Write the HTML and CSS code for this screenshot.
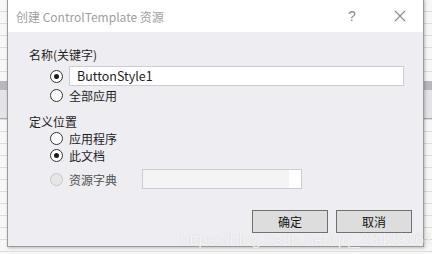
FILE: index.html
```html
<!DOCTYPE html>
<html lang="zh-CN">
<head>
  <meta charset="UTF-8">
  <title>创建 ControlTemplate 资源</title>
  <link rel="stylesheet" href="styles.css">
</head>
<body>
  <div class="backdrop">
    <div class="band"></div>
  </div>

  <div class="dialog">
    <div class="titlebar">
      <span class="title">创建 ControlTemplate 资源</span>
      <span class="help">?</span>
      <svg class="close" width="12" height="12" viewBox="0 0 12 12">
        <path d="M1 1 L11 11 M11 1 L1 11" stroke="#8a8a8a" stroke-width="1.1" fill="none"/>
      </svg>
    </div>

    <div class="content">
      <div class="group-label">名称(关键字)</div>
      <div class="row row-input">
        <span class="radio checked"></span>
        <div class="textbox">ButtonStyle1</div>
      </div>
      <div class="row">
        <span class="radio"></span>
        <span class="option">全部应用</span>
      </div>

      <div class="group-label second">定义位置</div>
      <div class="row">
        <span class="radio"></span>
        <span class="option">应用程序</span>
      </div>
      <div class="row">
        <span class="radio checked"></span>
        <span class="option">此文档</span>
      </div>
      <div class="row row-input dict">
        <span class="radio disabled"></span>
        <span class="option">资源字典</span>
        <div class="combo"><span class="combo-arrow"></span></div>
      </div>

      <div class="buttons">
        <button class="btn">确定</button>
        <button class="btn">取消</button>
      </div>
    </div>
  </div>

  <div class="watermark">https://blog.csdn.net/qq_28429161</div>
</body>
</html>
```

FILE: styles.css
```css
body {
  margin: 0;
  width: 432px;
  height: 254px;
  overflow: hidden;
  position: relative;
  background: #f7f7f7;
  font-family: "Noto Sans CJK SC", "Noto Sans", sans-serif;
  color: #1e1e1e;
}

/* 背後のエディタっぽい罫線 */
.backdrop {
  position: absolute;
  top: 0;
  left: 0;
  width: 100%;
  height: 100%;
  background:
    repeating-linear-gradient(to bottom, transparent 0, transparent 11px, #dcdcdc 11px, #dcdcdc 12px);
}

.band {
  position: absolute;
  top: 81px;
  left: 0;
  width: 100%;
  height: 38px;
  background: linear-gradient(to bottom, #b9b9bd 0, #b9b9bd 9px, #e4e4e8 9px, #e4e4e8 37px, #a9a9b5 37px);
}

.dialog {
  position: absolute; /* デスクトップ上のウィンドウ */
  left: 7px;
  top: -1px;
  width: 415px;
  height: 246px;
  border: 1px solid #9a9a9a;
  background: #eeedf2;
  box-shadow: 1px 1px 3px rgba(0, 0, 0, 0.25);
  display: flex;
  flex-direction: column;
}

.titlebar {
  height: 32px;
  background: #ffffff;
  display: flex;
  align-items: center;
  padding-left: 8px;
  flex-shrink: 0;
}

.title {
  font-size: 12px;
  color: #a0a0a0;
  flex: 1;
}

.help {
  font-size: 14px;
  color: #8a8a8a;
  width: 14px;
  margin-right: 32px;
  font-family: "Liberation Sans", sans-serif;
}

.close {
  margin-right: 17px;
}

.content {
  padding: 15px 11px 0 21px;
  font-size: 12px;
  display: flex;
  flex-direction: column;
}

.group-label {
  height: 16px;
  line-height: 16px;
}

.group-label.second {
  margin-top: 10px;
}

.row {
  display: flex;
  align-items: center;
  height: 17px;
  padding-left: 21px;
}

.row-input {
  height: 20px;
  margin-top: 3px;
  margin-bottom: 1px;
}

.row.dict {
  margin-top: 5px;
}

.radio {
  width: 11px;
  height: 11px;
  border: 1px solid #333333;
  border-radius: 50%;
  background: #ffffff;
  margin-right: 6px;
  flex-shrink: 0;
  display: flex;
  align-items: center;
  justify-content: center;
}

.radio.checked::after {
  content: "";
  width: 5px;
  height: 5px;
  border-radius: 50%;
  background: #1b1b1b;
}

.radio.disabled {
  border-color: #c8c8c8;
  background: #e6e6e6;
}

.textbox {
  width: 326px;
  height: 18px;
  line-height: 18px;
  border: 1px solid #cccbd8;
  background: #ffffff;
  padding-left: 7px;
  font-size: 12.5px;
  color: #1e1e1e;
}

.option {
  line-height: 17px;
}

.dict .option {
  color: #505050;
  width: 73px;
}

.combo {
  width: 158px;
  height: 18px;
  border: 1px solid #cccbd8;
  background: #f4f4f4;
  display: flex;
  justify-content: flex-end;
}

.combo-arrow {
  width: 12px;
  height: 18px;
  background: #ffffff;
}

.buttons {
  display: flex;
  justify-content: flex-end;
  gap: 8px;
  margin-top: 20px;
}

.btn {
  width: 76px;
  height: 23px;
  border: 1px solid #707070;
  background: #dddddd;
  font-family: "Noto Sans CJK SC", sans-serif;
  font-size: 12px;
  color: #111111;
  padding: 0;
}

.watermark {
  position: absolute; /* ウィンドウに重なる透かし */
  left: 180px;
  top: 233px;
  line-height: 12px;
  font-family: "Liberation Sans", sans-serif;
  font-size: 16.5px;
  color: rgba(255, 255, 255, 0.8);
  text-shadow: 0 0 1px rgba(140, 140, 140, 0.4);
  white-space: nowrap;
}
```
